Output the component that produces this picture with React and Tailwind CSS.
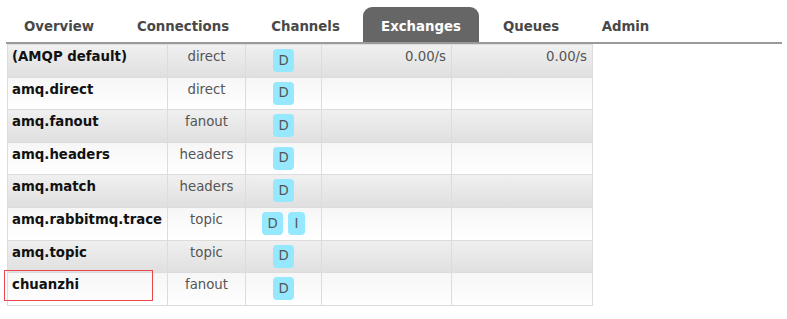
const tabs = [
  { label: 'Overview', w: 'w-[106px]' },
  { label: 'Connections', w: 'w-[130px]' },
  { label: 'Channels', w: 'w-[103px]' },
  { label: 'Exchanges', w: 'w-[116px]', active: true },
  { label: 'Queues', w: 'w-[92px]' },
  { label: 'Admin', w: 'w-[85px]' },
]

const rows = [
  { name: '(AMQP default)', type: 'direct', features: ['D'], rates: true },
  { name: 'amq.direct', type: 'direct', features: ['D'] },
  { name: 'amq.fanout', type: 'fanout', features: ['D'] },
  { name: 'amq.headers', type: 'headers', features: ['D'] },
  { name: 'amq.match', type: 'headers', features: ['D'] },
  { name: 'amq.rabbitmq.trace', type: 'topic', features: ['D', 'I'] },
  { name: 'amq.topic', type: 'topic', features: ['D'] },
  { name: 'chuanzhi', type: 'fanout', features: ['D'], marked: true },
]

function Badge({ letter }) {
  return (
    <span
      className={`inline-flex h-[23px] items-center justify-center rounded-[4px] bg-[#95e8fd] text-[13.3px] text-[#555] ${
        letter === 'I' ? 'w-[17px]' : 'w-[21px]'
      }`}
    >
      {letter}
    </span>
  )
}

export default function App() {
  return (
    <div
      className="h-[319px] w-[787px] bg-white"
      style={{ fontFamily: '"DejaVu Sans", Verdana, sans-serif' }}
    >
      <div className="pt-[7px]">
        <ul className="ml-[6px] flex w-[776px] gap-[6px] border-b-2 border-[#9a9a9a]">
          {tabs.map((t) => (
            <li
              key={t.label}
              className={`flex h-[35px] items-center justify-center rounded-t-[9px] pt-[4px] text-[13.3px] font-bold ${t.w} ${
                t.active ? 'bg-[#666] text-white' : 'text-[#484848]'
              }`}
            >
              {t.label}
            </li>
          ))}
        </ul>
      </div>

      <table className="ml-[7px] w-[585px] table-fixed border-collapse text-[13.3px]">
        <colgroup>
          <col className="w-[160px]" />
          <col className="w-[78px]" />
          <col className="w-[76px]" />
          <col className="w-[130px]" />
          <col className="w-[141px]" />
        </colgroup>
        <tbody>
          {rows.map((r, i) => (
            <tr
              key={r.name}
              className={`h-[32.6px] bg-gradient-to-b ${
                i % 2 === 0
                  ? 'from-[#f0f0f0] to-[#dfdfdf]'
                  : 'from-[#f6f6f6] to-[#ffffff]'
              }`}
            >
              <td className="relative border border-[#dcdcdc] px-[4px] pt-[4px] align-top font-bold leading-4 whitespace-nowrap text-[#111]">
                {r.name}
                {r.marked && (
                  <span className="absolute left-[-4px] top-[-3px] h-[31px] w-[149px] border border-[#e8464a]" />
                )}
              </td>
              <td className="border border-[#dcdcdc] pt-[4px] text-center align-top leading-4 text-[#555]">
                {r.type}
              </td>
              <td className="border border-[#dcdcdc] pt-[4px] align-top">
                <div className="flex justify-center gap-[5px]">
                  {r.features.map((f) => (
                    <Badge key={f} letter={f} />
                  ))}
                </div>
              </td>
              <td className="border border-[#dcdcdc] pr-[5px] pt-[4px] text-right align-top leading-4 text-[#555]">
                {r.rates ? '0.00/s' : ''}
              </td>
              <td className="border border-[#dcdcdc] pr-[5px] pt-[4px] text-right align-top leading-4 text-[#555]">
                {r.rates ? '0.00/s' : ''}
              </td>
            </tr>
          ))}
        </tbody>
      </table>
    </div>
  )
}
